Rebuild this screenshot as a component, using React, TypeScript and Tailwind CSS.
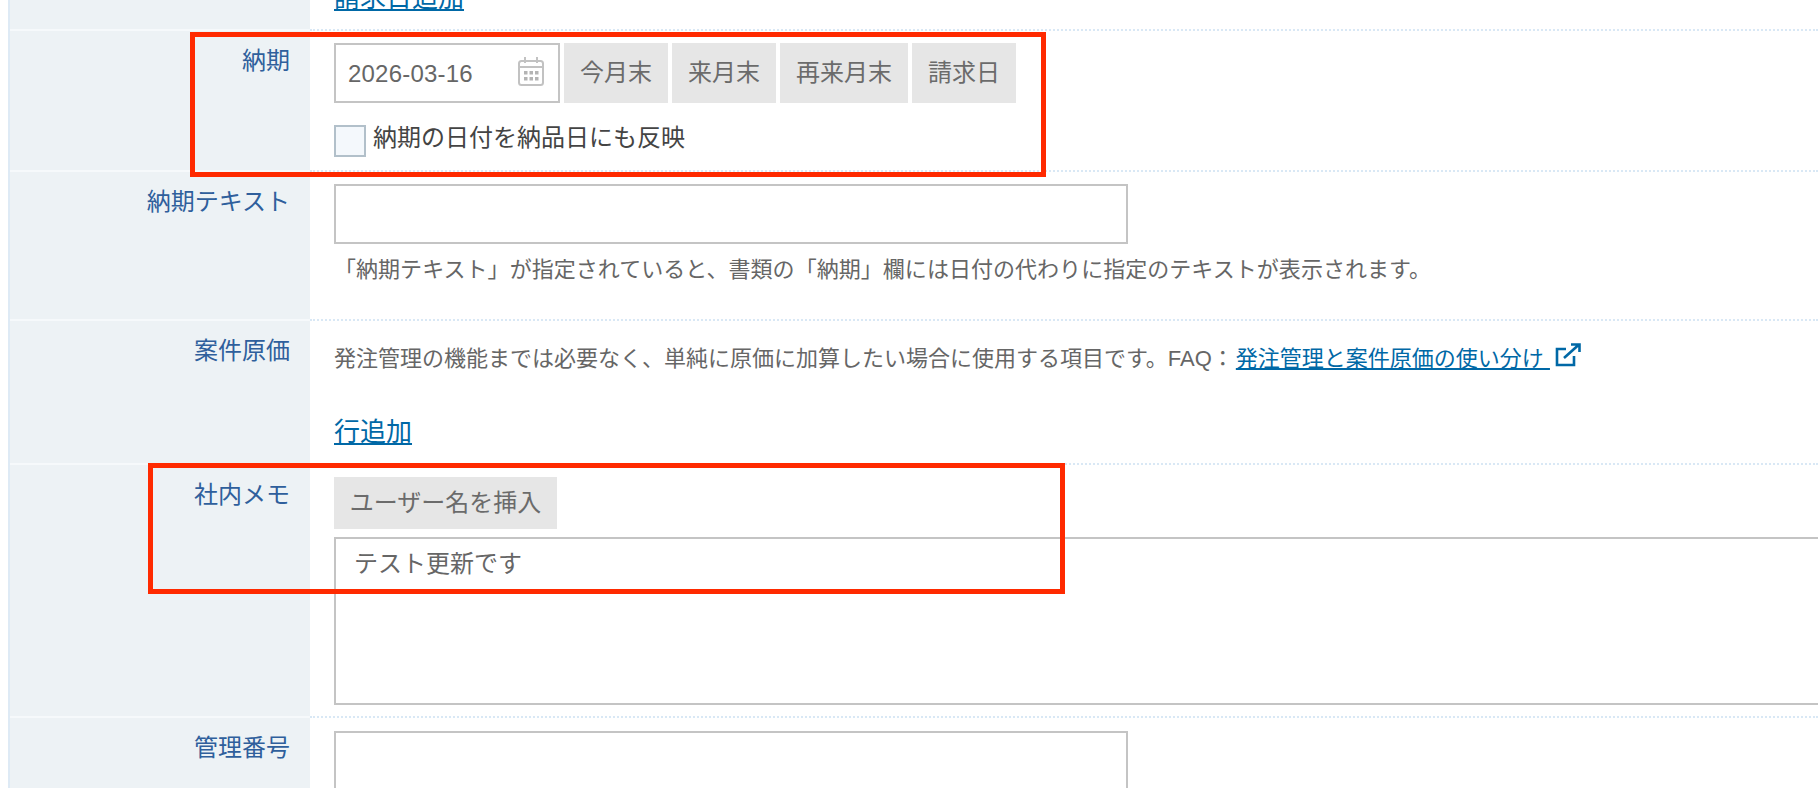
import type { ReactNode } from 'react';

function CalendarIcon() {
  return (
    <svg width="28" height="32" viewBox="0 0 28 32" fill="none" className="absolute left-[183px] top-[12px]">
      <rect x="2" y="6" width="24" height="24" rx="2.5" stroke="#c2c2c2" strokeWidth="2" />
      <path d="M2 12h24" stroke="#c2c2c2" strokeWidth="2" />
      <path d="M8 2v6M20 2v6" stroke="#c2c2c2" strokeWidth="2" />
      <g fill="#b4b4b4">
        <rect x="7" y="16" width="3.5" height="3.5" />
        <rect x="12.5" y="16" width="3.5" height="3.5" />
        <rect x="18" y="16" width="3.5" height="3.5" />
        <rect x="7" y="22" width="3.5" height="3.5" />
        <rect x="12.5" y="22" width="3.5" height="3.5" />
        <rect x="18" y="22" width="3.5" height="3.5" />
      </g>
    </svg>
  );
}

function ExternalIcon() {
  return (
    <svg width="26" height="24" viewBox="0 0 26 24" fill="none" className="ml-[5px] inline-block align-[-1px]" stroke="#0068a6" strokeWidth="2.6">
      <path d="M11 6H2v16h17v-9" />
      <path d="M9 15 23.5 2M16 1.5h8.5V9" />
    </svg>
  );
}

function Row({ label, children }: { label?: string; children: ReactNode }) {
  return (
    <div className="flex">
      <div className="w-[300px] shrink-0 border-t-2 border-[#f6f9fb] bg-[#edf2f5] pt-[14px] pr-5 text-right text-[24px] leading-[32px] text-[#2f5f9c]">
        {label}
      </div>
      <div className="min-w-0 flex-1 border-t-2 border-dotted border-[#d9e8f5] pl-6">{children}</div>
    </div>
  );
}

function GrayButton({ children }: { children: ReactNode }) {
  return (
    <button type="button" className="h-[60px] bg-[#e6e6e6] px-4 text-[24px] leading-[32px] text-[#6b6b6b]">
      {children}
    </button>
  );
}

export default function App() {
  return (
    <div className="relative h-[788px] w-[1818px] overflow-hidden bg-white pl-2 font-['Liberation_Sans','Noto_Sans_CJK_JP',sans-serif]">
      <div className="flex h-full flex-col border-l-2 border-[#deeaf5]">
        {/* 上の行は途中で切れている */}
        <div className="flex h-[29px] shrink-0">
          <div className="w-[300px] shrink-0 bg-[#edf2f5]" />
          <div className="flex flex-1 items-end overflow-hidden pb-[13px] pl-6">
            <a className="shrink-0 text-[26px] leading-[36px] text-[#0068a6] underline">請求日追加</a>
          </div>
        </div>

        <Row label="納期">
          <div className="pt-3 pb-[13px]">
            <div className="flex gap-1">
              <div className="relative">
                <input
                  readOnly
                  value="2026-03-16"
                  className="h-[60px] w-[226px] border-2 border-[#c4c4c4] px-3 pt-[2px] text-[24px] tracking-[0.2px] text-[#666666] outline-none"
                />
                <CalendarIcon />
              </div>
              <GrayButton>今月末</GrayButton>
              <GrayButton>来月末</GrayButton>
              <GrayButton>再来月末</GrayButton>
              <GrayButton>請求日</GrayButton>
            </div>
            <label className="mt-[22px] flex h-8 items-center gap-[7px] text-[24px] leading-[28px] text-[#444444]">
              <span className="h-8 w-8 border-2 border-[#b2c0ca] bg-[#f4f8fc]" />
              <span className="-mt-[7px]">納期の日付を納品日にも反映</span>
            </label>
          </div>
        </Row>

        <Row label="納期テキスト">
          <div className="pt-3 pb-[33px]">
            <input readOnly className="block h-[60px] w-[794px] border-2 border-[#c4c4c4] outline-none" />
            <p className="mt-[10px] text-[22px] leading-[32px] tracking-[0.04px] text-[#666666]">
              「納期テキスト」が指定されていると、書類の「納期」欄には日付の代わりに指定のテキストが表示されます。
            </p>
          </div>
        </Row>

        <Row label="案件原価">
          <div className="pt-[22px] pb-[13px]">
            <p className="text-[22px] leading-[32px] whitespace-nowrap text-[#666666]">
              発注管理の機能までは必要なく、単純に原価に加算したい場合に使用する項目です。FAQ：
              <a className="ml-[2px] text-[#0068a6] underline">発注管理と案件原価の使い分け </a>
              <ExternalIcon />
            </p>
            <a className="mt-[39px] block text-[26px] leading-[36px] text-[#0068a6] underline">行追加</a>
          </div>
        </Row>

        <Row label="社内メモ">
          <div className="pt-3 pb-[11px]">
            <button type="button" className="block h-[52px] w-[223px] bg-[#e6e6e6] text-[24px] leading-[32px] text-[#6b6b6b]">
              ユーザー名を挿入
            </button>
            <textarea
              readOnly
              defaultValue="テスト更新です"
              className="mt-2 block h-[168px] w-[1600px] resize-none border-2 border-[#c4c4c4] px-[18px] py-[9px] text-[24px] leading-[32px] text-[#666666] outline-none"
            />
          </div>
        </Row>

        <Row label="管理番号">
          <div className="pt-[13px]">
            <input readOnly className="block h-[60px] w-[794px] border-2 border-[#c4c4c4] outline-none" />
          </div>
        </Row>
      </div>

      {/* 赤枠の注釈 */}
      <div className="absolute top-[32px] left-[190px] h-[145px] w-[856px] border-[5px] border-[#ff2a00]" />
      <div className="absolute top-[463px] left-[148px] h-[131px] w-[917px] border-[5px] border-[#ff2a00]" />
    </div>
  );
}
